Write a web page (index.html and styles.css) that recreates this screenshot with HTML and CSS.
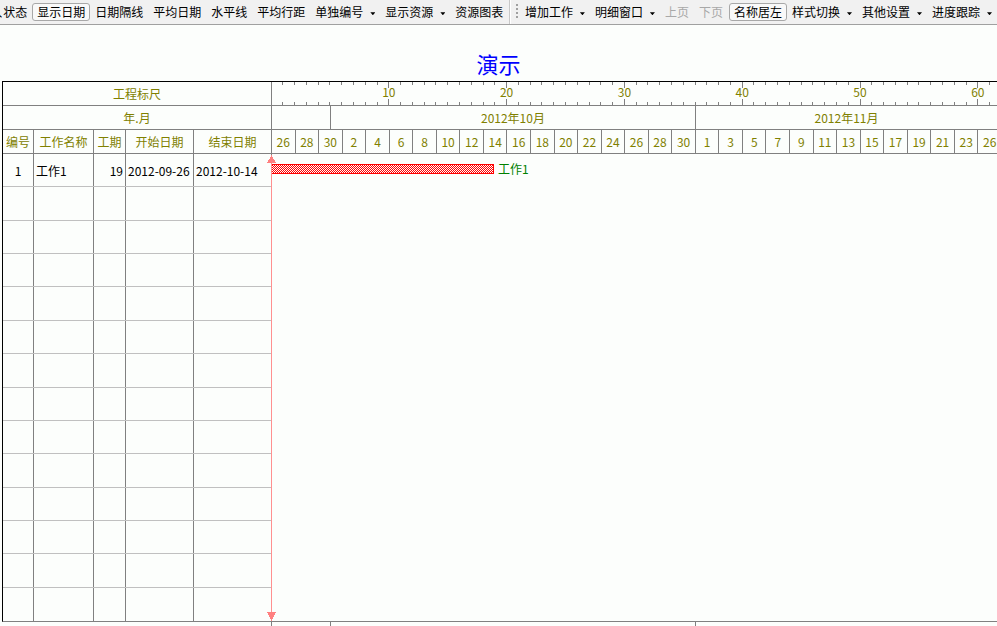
FILE: index.html
```html
<!DOCTYPE html>
<html lang="zh-CN">
<head>
  <meta charset="UTF-8">
  <title>演示</title>
  <link rel="stylesheet" href="styles.css">
</head>
<body>

<div class="toolbar">
  <span class="tb-cut">入</span>
  <span class="tb-item first">状态</span>
  <span class="tb-btn">显示日期</span>
  <span class="tb-item">日期隔线</span>
  <span class="tb-item">平均日期</span>
  <span class="tb-item">水平线</span>
  <span class="tb-item">平均行距</span>
  <span class="tb-item drop">单独编号</span>
  <span class="tb-item drop">显示资源</span>
  <span class="tb-item">资源图表</span>
  <span class="tb-sep"></span>
  <span class="tb-grip"></span>
  <span class="tb-item drop">增加工作</span>
  <span class="tb-item drop">明细窗口</span>
  <span class="tb-item off">上页</span>
  <span class="tb-item off">下页</span>
  <span class="tb-btn">名称居左</span>
  <span class="tb-item drop">样式切换</span>
  <span class="tb-item drop">其他设置</span>
  <span class="tb-item drop">进度跟踪</span>
</div>

<div class="title"><span>演示</span></div>

<div class="sheet">
  <div class="left">
    <div class="hrow">工程标尺</div>
    <div class="hrow">年.月</div>
    <div class="row head">
      <div>编号</div><div>工作名称</div><div>工期</div><div>开始日期</div><div>结束日期</div>
    </div>
    <div class="rows">
      <div class="row">
        <div class="c-no">1</div><div class="c-name">工作1</div><div class="c-dur">19</div><div class="c-date">2012-09-26</div><div class="c-date">2012-10-14</div>
      </div>
      <div class="row"><div></div><div></div><div></div><div></div><div></div></div>
      <div class="row"><div></div><div></div><div></div><div></div><div></div></div>
      <div class="row"><div></div><div></div><div></div><div></div><div></div></div>
      <div class="row"><div></div><div></div><div></div><div></div><div></div></div>
      <div class="row"><div></div><div></div><div></div><div></div><div></div></div>
      <div class="row"><div></div><div></div><div></div><div></div><div></div></div>
      <div class="row"><div></div><div></div><div></div><div></div><div></div></div>
      <div class="row"><div></div><div></div><div></div><div></div><div></div></div>
      <div class="row"><div></div><div></div><div></div><div></div><div></div></div>
      <div class="row"><div></div><div></div><div></div><div></div><div></div></div>
      <div class="row"><div></div><div></div><div></div><div></div><div></div></div>
      <div class="row"><div></div><div></div><div></div><div></div><div></div></div>
      <div class="row"><div></div><div></div><div></div><div></div><div></div></div>
    </div>
  </div>

  <div class="chart">
    <div class="ruler">
      <svg width="725" height="23" shape-rendering="crispEdges">
        <line x1="-1.5" y1="1.5" x2="725" y2="1.5" stroke="#808080" stroke-width="3" stroke-dasharray="1 10.78"/>
        <line x1="-1.5" y1="21.5" x2="725" y2="21.5" stroke="#808080" stroke-width="3" stroke-dasharray="1 10.78"/>
        <line x1="-1.5" y1="3" x2="725" y2="3" stroke="#808080" stroke-width="6" stroke-dasharray="1 116.8"/>
        <line x1="-1.5" y1="20" x2="725" y2="20" stroke="#808080" stroke-width="6" stroke-dasharray="1 116.8"/>
        <g class="ruler-num">
          <text x="116.8" y="15">10</text>
          <text x="234.6" y="15">20</text>
          <text x="352.4" y="15">30</text>
          <text x="470.2" y="15">40</text>
          <text x="588" y="15">50</text>
          <text x="705.8" y="15">60</text>
        </g>
      </svg>
    </div>

    <div class="months">
      <div class="m-pre"></div>
      <div class="m-oct">2012年10月</div>
      <div class="m-nov">2012年11月</div>
    </div>

    <div class="days">
      <div>26</div><div>28</div><div>30</div>
      <div>2</div><div>4</div><div>6</div><div>8</div><div>10</div><div>12</div><div>14</div><div>16</div>
      <div>18</div><div>20</div><div>22</div><div>24</div><div>26</div><div>28</div><div>30</div>
      <div>1</div><div>3</div><div>5</div><div>7</div><div>9</div><div>11</div><div>13</div>
      <div>15</div><div>17</div><div>19</div><div>21</div><div>23</div><div>26</div>
    </div>

    <div class="plot">
      <svg class="bar" width="223" height="10" shape-rendering="crispEdges">
        <defs>
          <pattern id="chk" width="2" height="2" patternUnits="userSpaceOnUse">
            <rect width="2" height="2" fill="#fff"/>
            <rect width="1" height="1" fill="#f00"/>
            <rect x="1" y="1" width="1" height="1" fill="#f00"/>
          </pattern>
        </defs>
        <rect x="0.5" y="0.5" width="222" height="9" fill="url(#chk)" stroke="#f00"/>
      </svg>
      <span class="bar-label">工作1</span>
      <svg class="today" width="9" height="468" shape-rendering="crispEdges">
        <polygon points="4.5,1 9,9 0,9" fill="#ff8080"/>
        <rect x="4" y="9" width="1" height="450" fill="#ff9090"/>
        <polygon points="0,458 9,458 4.5,467" fill="#ff8080"/>
      </svg>
    </div>
  </div>
</div>

<div class="foot">
  <div class="f-gap"></div>
  <div class="f-a"></div>
  <div class="f-b"></div>
  <div class="f-c"></div>
</div>

</body>
</html>
```

FILE: styles.css
```css
html, body {
  margin: 0;
  overflow: hidden;
}
body {
  width: 997px;
  height: 626px;
  background: #fcfefc;
  font-family: "Noto Sans CJK SC", "Liberation Sans", sans-serif;
  font-size: 12px;
  color: #000;
}

/* toolbar */
.toolbar {
  display: flex;
  align-items: center;
  height: 24px;
  background: #f1f1f1;
  border-bottom: 1px solid #a0a0a0;
  white-space: nowrap;
  overflow: hidden;
}
.tb-cut {
  width: 3px;
  overflow: hidden;
  direction: rtl;
  line-height: 18px;
}
.tb-item {
  padding: 0 5px;
  line-height: 18px;
}
.tb-item.first {
  padding-left: 1px;
}
.tb-item.off {
  color: #a8a8a8;
}
.drop::after {
  content: "";
  display: inline-block;
  width: 5px;
  height: 3px;
  margin-left: 7px;
  vertical-align: middle;
  background: #000;
  clip-path: polygon(0 0, 100% 0, 50% 100%);
}
.tb-btn {
  padding: 0 4px;
  line-height: 16px;
  border: 1px solid #a8a8a8;
  border-radius: 3px;
  background: #f9f9f9;
}
.tb-item.off + .tb-btn {
  margin-left: 1px;
}
.tb-sep {
  align-self: stretch;
  margin-left: 1px;
  border-left: 1px solid #c8c8c8;
  border-right: 1px solid #fff;
}
.tb-grip {
  width: 2px;
  height: 16px;
  margin: 0 2px 0 5px;
  background: repeating-linear-gradient(to bottom, #a0a0a0 0 2px, transparent 2px 4px);
}

/* title */
.title {
  height: 56px;
  display: flex;
  align-items: flex-end;
  justify-content: center;
}
.title span {
  color: #0000ff;
  font-size: 22px;
  line-height: 22px;
  margin-bottom: 7px;
}

/* sheet */
.sheet {
  display: flex;
  margin-left: 2px;
  border-left: 1px solid #000;
  border-top: 1px solid #000;
  border-bottom: 1px solid #808080;
}
.left {
  width: 268px;
  flex: none;
  border-right: 1px solid #808080;
}
.hrow {
  height: 23px;
  line-height: 23px;
  text-align: center;
  color: #808000;
  border-bottom: 1px solid #808080;
}
.row {
  display: grid;
  grid-template-columns: 31px 60px 32px 68px 77px;
  height: 33.36px;
  box-sizing: border-box;
  border-bottom: 1px solid #c0c0c0;
}
.rows .row:last-child {
  border-bottom: none;
}
.row > div {
  border-right: 1px solid #808080;
  display: flex;
  align-items: center;
  padding: 0 2px;
  white-space: nowrap;
}
.row > div:last-child {
  border-right: none;
}
.row.head {
  height: 24px;
  border-bottom-color: #808080;
}
.row.head > div {
  justify-content: center;
  padding: 0;
  color: #808000;
}
.c-no {
  justify-content: center;
}
.c-dur {
  justify-content: flex-end;
}

/* chart */
.chart {
  flex: 1;
  min-width: 0;
}
.ruler {
  height: 23px;
  border-bottom: 1px solid #808080;
  overflow: hidden;
}
.ruler svg {
  display: block;
}
.ruler-num text {
  font-family: "Noto Sans CJK SC", sans-serif;
  font-size: 12px;
  fill: #808000;
  text-anchor: middle;
}
.months {
  display: flex;
  height: 23px;
  border-bottom: 1px solid #808080;
  color: #808000;
  line-height: 23px;
  text-align: center;
}
.months > div {
  box-sizing: border-box;
  flex: none;
}
.m-pre {
  width: 58.9px;
  border-right: 1px solid #808080;
}
.m-oct {
  width: 365.18px;
  border-right: 1px solid #808080;
}
.months .m-nov {
  flex: 1;
}
.days {
  display: flex;
  height: 23px;
  border-bottom: 1px solid #808080;
  overflow: hidden;
  color: #808000;
  line-height: 23px;
}
.days > div {
  flex: none;
  width: 23.56px;
  box-sizing: border-box;
  border-right: 1px solid #808080;
  text-align: center;
}
.plot {
  position: relative;
  height: 467px;
}
.bar {
  position: absolute;
  left: -1px;
  top: 10px;
}
.bar-label {
  position: absolute;
  left: 226px;
  top: 5px;
  line-height: 20px;
  color: #008000;
}
.today {
  position: absolute;
  left: -5px;
  top: 0;
}

/* footer ticks */
.foot {
  display: flex;
  height: 4px;
}
.foot > div {
  flex: none;
  box-sizing: border-box;
}
.f-gap {
  width: 271px;
}
.f-a {
  width: 58.9px;
  border-left: 1px solid #808080;
}
.f-b {
  width: 365.18px;
  border-left: 1px solid #808080;
}
.foot .f-c {
  flex: 1;
  border-left: 1px solid #808080;
}
```
